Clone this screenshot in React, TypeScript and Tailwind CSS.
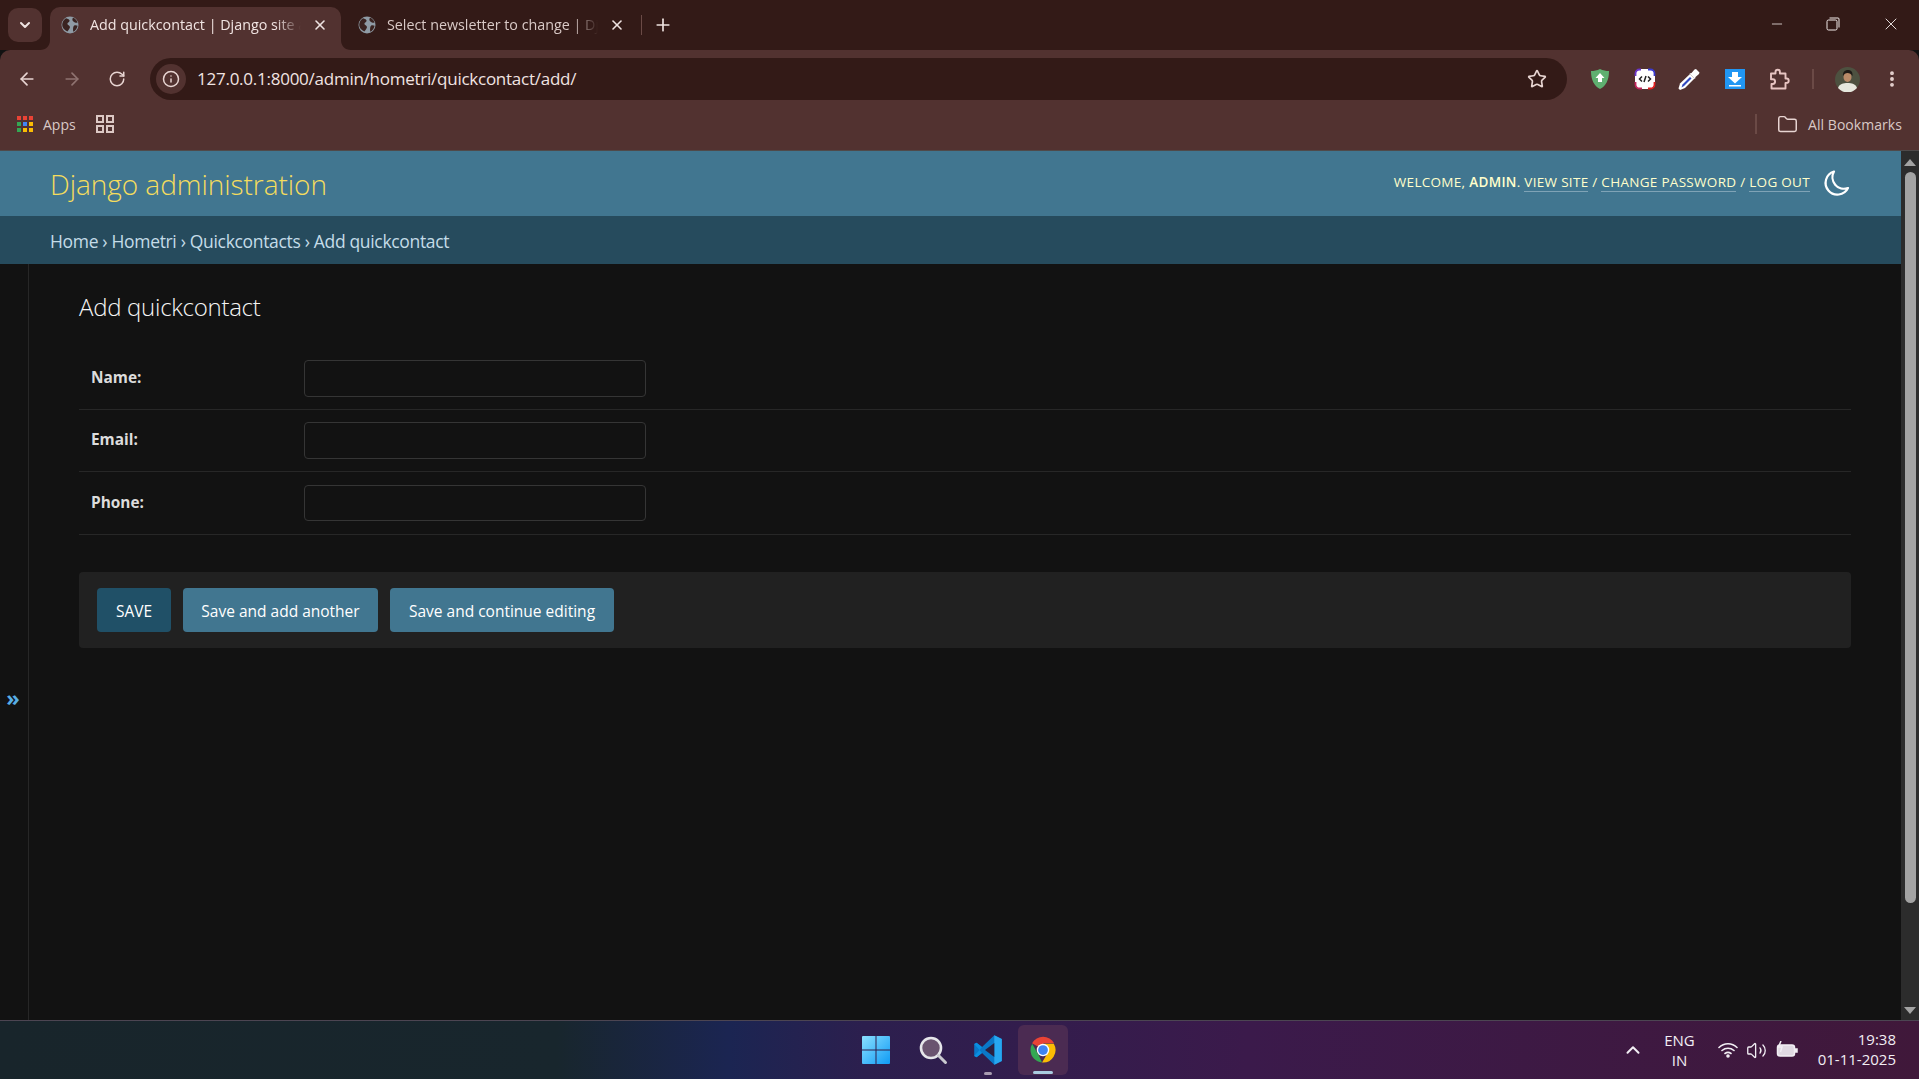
import React from "react";
import { ArrowLeft, ArrowRight, RotateCw, Info, Star, Folder, X, Plus, ChevronDown, ChevronUp, Minus, Volume2, EllipsisVertical } from "lucide-react";

function Globe() {
  return (
    <svg width="18" height="18" viewBox="0 0 18 18" className="shrink-0">
      <circle cx="9" cy="9" r="8.5" fill="#8f9ba5" />
      <path d="M5 2.2c2 .4 3.6 1.4 3.6 2.6S6.8 6.4 6.4 7.6 8 9.4 8.8 10.4 8 13 6.4 15.6C3.4 14 1.2 11.6 1.2 9c0-3 1.6-5.4 3.8-6.8zM12 1.4c2.4 1 4 3 4.6 5.2-1.4.6-3-.2-4.2-1.2S11 3 12 1.4zM13.2 9.4c1.2-.4 2.6-.2 3.4.4-.4 2.6-2 4.8-4.2 6-.6-1.6-.4-5.8.8-6.4z" fill="#3a2320" />
    </svg>
  );
}

function Tab({ active, title }: { active?: boolean; title: string }) {
  return (
    <div className={active ? "relative flex h-[43px] w-[291px] items-center rounded-t-[10px] bg-[#523230] pb-[7px] pl-[11px] text-[#f1e4e2]" : "relative flex h-[43px] w-[300px] items-center pb-[7px] pl-[17px] text-[#d9c9c6]"}>
      {active && (
        <>
          <svg width="10" height="10" viewBox="0 0 10 10" className="absolute bottom-0 left-[-10px]"><path d="M10 0v10H0c6 0 10-4 10-10z" fill="#523230" /></svg>
          <svg width="10" height="10" viewBox="0 0 10 10" className="absolute bottom-0 right-[-10px]"><path d="M0 0v10h10C4 10 0 6 0 0z" fill="#523230" /></svg>
        </>
      )}
      <Globe />
      <span className="ml-[11px] w-[211px] overflow-hidden whitespace-nowrap text-[14.300px] [mask-image:linear-gradient(to_right,black_88%,transparent_100%)]">{title}</span>
      <X size={16} strokeWidth={2.4} className="ml-[11px] text-[#efe3e1]" />
    </div>
  );
}

function CodeExt() {
  return (
    <svg width="22" height="22" viewBox="0 0 22 22">
      <rect x="1" y="1" width="20" height="20" rx="5" fill="#fff" />
      <path d="M7 1.500H5.500a4 4 0 0 0-4 4V8" stroke="#6a35c9" strokeWidth="1.800" fill="none" />
      <path d="M1.500 14v2.500a4 4 0 0 0 4 4H8" stroke="#c4265e" strokeWidth="1.800" fill="none" />
      <path d="M14 20.500h2.500a4 4 0 0 0 4-4V14" stroke="#e02020" strokeWidth="1.800" fill="none" />
      <path d="M14 1.500h2.500a4 4 0 0 1 4 4V8" stroke="#3b3bd0" strokeWidth="1.800" fill="none" />
      <path d="M8 8.500L5.500 11 8 13.500M14 8.500l2.500 2.500-2.500 2.500M12 8l-2 6" stroke="#222" strokeWidth="1.500" fill="none" />
    </svg>
  );
}

function Avatar() {
  return (
    <svg width="25" height="25" viewBox="0 0 25 25">
      <circle cx="12.500" cy="12.500" r="12.500" fill="#4d5140" />
      <path d="M3 21c1-4 5.500-5 9.500-5s8.500 1 9.500 5a12.500 12.500 0 0 1-19 0z" fill="#e6e8de" />
      <ellipse cx="12.500" cy="10" rx="4" ry="5" fill="#b98a68" />
      <path d="M8 9c-.5-4 2-6 5-6s5 2 4.500 6c-1-2-3-3-5-3S9 7 8 9z" fill="#1e1a16" />
    </svg>
  );
}

function Picker() {
  return (
    <svg width="24" height="24" viewBox="0 0 24 24">
      <path d="M2 23l-1.500-1.500 1.500-5L12 7l4.500 4.500L7 21z" fill="#fff" />
      <path d="M3.500 20.500l1-3L12 10l1.500 1.500L6 19z" fill="#3048c0" />
      <path d="M11.500 6.500l2-.5 3-3.500 1.500-.5 3.500 3.500-.5 1.500-3.500 3-.5 2z" fill="#fff" />
    </svg>
  );
}

function PuzzleOutline() {
  return (
    <svg width="23" height="23" viewBox="0 0 23 23" fill="none" stroke="#e8c5c2" strokeWidth="1.900" strokeLinejoin="round">
      <path d="M3 5.500h4.500V4a2.200 2.200 0 0 1 4.400 0v1.500h5.600v5h1a2.200 2.200 0 0 1 0 4.400h-1v5.600H3.500v-4.500h1.200a2.400 2.400 0 0 0 0-4.800H3z" />
    </svg>
  );
}

function Crescent() {
  return (
    <svg width="28" height="28" viewBox="0 0 28 28" fill="none" stroke="#fff" strokeWidth="2.200" strokeLinejoin="round">
      <path d="M12 2.500A11.800 11.800 0 1 0 26 19 A11.500 11.500 0 0 1 12 2.500z" />
    </svg>
  );
}

function Windows() {
  return (
    <svg width="30" height="30" viewBox="0 0 30 30">
      <defs>
        <linearGradient id="wg" x1="0" y1="0" x2="1" y2="1"><stop offset="0" stopColor="#8be0ff" /><stop offset="1" stopColor="#0f9bf5" /></linearGradient>
      </defs>
      <path d="M1 2a1 1 0 0 1 1-1h12.500v13.500H1zM15.500 1H28a1 1 0 0 1 1 1v12.500H15.500zM1 15.500h13.500V29H2a1 1 0 0 1-1-1zM15.500 15.500H29V28a1 1 0 0 1-1 1H15.500z" fill="url(#wg)" />
    </svg>
  );
}

function VSCode() {
  return (
    <svg width="30" height="30" viewBox="0 0 100 100">
      <path d="M71 99l25-12V13L71 1 30 40 12 26 4 30v40l8 4 18-14z" fill="#0a78c8" />
      <path d="M71 1l25 12v74L71 99z" fill="#27a7f0" />
      <path d="M71 27L40 50l31 23z" fill="#2b2040" />
      <path d="M4 30l8-4 18 14-8 10zM4 70l8 4 18-14-8-10z" fill="#0a8fe0" />
    </svg>
  );
}

function Chrome() {
  return (
    <svg width="30" height="30" viewBox="0 0 48 48">
      <path d="M24 24 L6.500 14 A20.500 20.500 0 0 1 41.800 14 H24z" fill="#ea4335" transform="translate(0 -1)" />
      <path d="M4 24a20 20 0 0 1 2.700-10L17 32l5.500 11.900A20 20 0 0 1 4 24z" fill="#34a853" />
      <path d="M24 14h17.300A20 20 0 0 1 22.500 44L33 26z" fill="#fbbc04" />
      <circle cx="24" cy="24" r="10" fill="#fff" />
      <circle cx="24" cy="24" r="7.800" fill="#3f83f1" />
    </svg>
  );
}

function TaskSearch() {
  return (
    <svg width="30" height="30" viewBox="0 0 30 30" fill="none">
      <circle cx="13" cy="13" r="10" fill="#6a5470" stroke="#e6e6ea" strokeWidth="2.600" />
      <path d="M20.500 20.500l7 7" stroke="#c9c9cf" strokeWidth="3" strokeLinecap="round" />
    </svg>
  );
}

function Row({ label, last }: { label: string; last?: boolean }) {
  return (
    <div className={last ? "flex h-[63px] items-center border-b border-[#272727] pb-[1px] pl-[12px]" : "flex h-[62px] items-center border-b border-[#272727] pl-[12px]"}>
      <label className={last ? "w-[213px] text-[15.400px] font-bold text-[#dcdcdc]" : "w-[213px] -translate-y-[1px] text-[15.400px] font-bold text-[#dcdcdc]"}>{label}</label>
      <input className={last ? "h-[36px] w-[342px] rounded-[4px] border border-[#353535] bg-[#121212]" : "h-[37px] w-[342px] rounded-[4px] border border-[#353535] bg-[#121212]"} />
    </div>
  );
}

export default function App() {
  return (
    <div className="flex h-[1079px] w-[1919px] flex-col overflow-hidden bg-[#121212] font-['Open_Sans',sans-serif] text-white">
      {/* title bar */}
      <div className="flex h-[50px] shrink-0 items-end bg-[#331a17]">
        <div className="mb-[8px] ml-[8px] flex h-[34px] w-[34px] items-center justify-center rounded-[10px] bg-[#523230]">
          <ChevronDown size={16} strokeWidth={3} className="text-[#efe3e1]" />
        </div>
        <div className="ml-[8px]"><Tab active title="Add quickcontact | Django site admin" /></div>
        <Tab title="Select newsletter to change | Django site admin" />
        <div className="mb-[15px] h-[20px] w-[1px] bg-[#6b4a46]" />
        <Plus size={20} strokeWidth={2} className="mb-[15px] ml-[11px] text-[#efe3e1]" />
        <div className="mb-[16px] ml-auto flex w-[165px] items-center text-[#f3ebea]">
          <Minus size={16} strokeWidth={1.200} className="ml-[15px]" />
          <svg width="14" height="14" viewBox="0 0 14 14" className="ml-[41px]" fill="none" stroke="currentColor" strokeWidth="1"><rect x="1" y="3" width="10" height="10" rx="1.500" /><path d="M3.500 1H12a1 1 0 0 1 1 1v8.500" /></svg>
          <X size={20} strokeWidth={1.100} className="ml-[41px]" />
        </div>
      </div>
      {/* toolbar */}
      <div className="flex h-[50px] shrink-0 items-center rounded-tl-[10px] rounded-tr-[10px] bg-[#523230] pt-[8px] text-[#e8d5d2]">
        <ArrowLeft size={20} strokeWidth={2} className="ml-[17px]" />
        <ArrowRight size={20} strokeWidth={2} className="ml-[25px] text-[#8f7370]" />
        <RotateCw size={18} strokeWidth={2} className="ml-[26px]" />
        <div className="ml-[24px] flex h-[42px] w-[1417px] items-center rounded-full bg-[#331a17] pl-[6px]">
          <div className="flex h-[30px] w-[30px] items-center justify-center rounded-full bg-[#523230]"><Info size={18} strokeWidth={2} /></div>
          <span className="ml-[11px] text-[17px] tracking-[-0.250px] text-[#f1e4e2]">127.0.0.1:8000/admin/hometri/quickcontact/add/</span>
          <Star size={20} strokeWidth={2} className="ml-auto mr-[20px]" />
        </div>
        <div className="ml-[10px] flex w-[45px] justify-center">
          <svg width="20" height="22" viewBox="0 0 20 22"><path d="M10 1c3 1.500 6 2 9 2 0 9-3 15-9 18C4 18 1 12 1 3c3 0 6-.5 9-2z" fill="#5fb070" /><path d="M10 5l4.500 5H12v4H8v-4H5.500z" fill="#fff" /></svg>
        </div>
        <div className="flex w-[45px] justify-center"><CodeExt /></div>
        <div className="flex w-[45px] justify-center"><Picker /></div>
        <div className="flex w-[45px] justify-center">
          <svg width="20" height="20" viewBox="0 0 20 20"><rect width="20" height="20" fill="#2196f3" /><path d="M7 3h6v5h4l-7 6.500L3 8h4z" fill="#fff" /><rect x="4" y="16" width="12" height="1.500" fill="#fff" /></svg>
        </div>
        <div className="flex w-[45px] justify-center"><PuzzleOutline /></div>
        <div className="ml-[10px] h-[20px] w-[2px] bg-[#6b4a46]" />
        <div className="ml-[21px]"><Avatar /></div>
        <EllipsisVertical size={20} strokeWidth={2.600} className="ml-[22px]" />
      </div>
      {/* bookmarks */}
      <div className="flex h-[51px] shrink-0 items-center border-b border-[#4f4a4a] bg-[#523230] pb-[2px] text-[#e8d5d2]">
        <div className="ml-[17px] grid grid-cols-3 gap-[2px]">
          {["bg-[#ea4335]","bg-[#ea4335]","bg-[#ea4335]","bg-[#34a853]","bg-[#4285f4]","bg-[#fbbc04]","bg-[#34a853]","bg-[#fbbc04]","bg-[#fbbc04]"].map((c, i) => (
            <div key={i} className={"h-[4px] w-[4px] " + c} />
          ))}
        </div>
        <span className="ml-[10px] text-[14px] text-[#d9c9c6]">Apps</span>
        <div className="ml-[20px] grid grid-cols-2 gap-[2px]">
          {[0, 1, 2, 3].map((i) => (
            <div key={i} className="h-[8px] w-[8px] border-2 border-[#dcc8c4]" />
          ))}
        </div>
        <div className="ml-auto h-[20px] w-[2px] bg-[#6b4a46]" />
        <Folder size={21} strokeWidth={1.700} className="ml-[20px] text-[#e8d5d2]" />
        <span className="ml-[10px] mr-[17px] text-[14px] tracking-[0.050px] text-[#d9c9c6]">All Bookmarks</span>
      </div>
      {/* page */}
      <div className="flex min-h-0 flex-1">
        <div className="flex min-w-0 flex-1 flex-col">
          <div className="flex h-[65px] shrink-0 items-center justify-between bg-[#417690] pl-[50px] pr-[52px]">
            <span className="text-[28px] font-light tracking-[-0.050px] text-[#f5dd5d]">Django administration</span>
            <div className="flex items-center">
              <span className="-translate-y-[1px] text-[13.500px] tracking-[0.300px] text-[#ffffcc]">
                WELCOME, <b className="font-semibold">ADMIN</b>.{" "}
                <span className="border-b border-[#7fa3b6]">VIEW SITE</span> /{" "}
                <span className="border-b border-[#7fa3b6]">CHANGE PASSWORD</span> /{" "}
                <span className="border-b border-[#7fa3b6]">LOG OUT</span>
              </span>
              <div className="ml-[12px] mr-[-1px] -translate-y-[1px]"><Crescent /></div>
            </div>
          </div>
          <div className="flex h-[48px] shrink-0 items-center bg-[#264b5d] pl-[50px] pt-[2px] text-[17.500px] tracking-[-0.330px] text-[#c4dce8]">
            Home › Hometri › Quickcontacts › Add quickcontact
          </div>
          <div className="flex min-h-0 flex-1">
            <div className="flex w-[29px] shrink-0 justify-center border-r border-[#272727] pt-[418px]">
              <span className="-translate-x-[1px] text-[22px] font-bold leading-[30px] text-[#58aee6]">»</span>
            </div>
            <div className="flex-1 px-[50px] pt-[24px]">
              <h1 className="text-[24px] font-light leading-[38px] tracking-[-0.280px] text-[#f5f5f5]">Add quickcontact</h1>
              <div className="mt-[22px]">
                <Row label="Name:" />
                <Row label="Email:" />
                <Row label="Phone:" last />
              </div>
              <div className="mt-[37px] flex h-[76px] items-center gap-[12px] rounded-[4px] bg-[#212121] pl-[18px]">
                <button className="h-[44px] w-[74px] rounded-[4px] bg-[#205067] pt-[3px] text-[15.500px] text-white">SAVE</button>
                <button className="h-[44px] w-[195px] rounded-[4px] bg-[#417690] pt-[3px] text-[15.500px] text-white">Save and add another</button>
                <button className="h-[44px] w-[224px] rounded-[4px] bg-[#417690] pt-[3px] text-[15.500px] text-white">Save and continue editing</button>
              </div>
            </div>
          </div>
        </div>
        {/* scrollbar */}
        <div className="flex w-[18px] shrink-0 flex-col items-center bg-[#2c2c2c]">
          <div className="mt-[8px] h-0 w-0 border-x-[6px] border-b-[7px] border-x-transparent border-b-[#a3a3a3]" />
          <div className="mt-[6px] h-[731px] w-[11px] rounded-full bg-[#a3a3a3]" />
          <div className="mb-[6px] mt-auto h-0 w-0 border-x-[6px] border-t-[7px] border-x-transparent border-t-[#a3a3a3]" />
        </div>
      </div>
      {/* taskbar */}
      <div className="relative flex h-[59px] shrink-0 items-center border-t border-[#4c4552] bg-[linear-gradient(90deg,#18252b_0%,#18262d_29%,#1b2552_38%,#2c1f4e_45%,#3b1a4b_65%,#40183a_100%)]">
        <div className="ml-[861px]"><Windows /></div>
        <div className="ml-[27px]"><TaskSearch /></div>
        <div className="relative ml-[25px]"><VSCode /><div className="absolute bottom-[-10px] left-[11px] h-[3px] w-[8px] rounded-full bg-[#a89bb0]" /></div>
        <div className="relative ml-[15px] flex h-[50px] w-[50px] items-center justify-center rounded-[6px] bg-[#4b2b52]"><Chrome /><div className="absolute bottom-[1px] left-[15px] h-[3px] w-[20px] rounded-full bg-[#a9cbe0]" /></div>
        <div className="ml-auto flex items-center text-[#f2eef4]">
          <ChevronUp size={22} strokeWidth={2.200} className="mr-[20px]" />
          <div className="mr-[23px] text-center text-[15px] leading-[20px]"><div>ENG</div><div>IN</div></div>
          <svg width="20" height="16" viewBox="0 0 20 16" fill="none" stroke="currentColor" strokeWidth="1.600" strokeLinecap="round"><path d="M1 5.500c5-5 13-5 18 0M4 8.500c3.500-3 8.500-3 12 0M7 11.500c2-1.500 4-1.500 6 0" /><circle cx="10" cy="14" r="1" fill="currentColor" /></svg>
          <Volume2 size={21} strokeWidth={1.500} className="ml-[8px]" />
          <svg width="22" height="18" viewBox="0 0 22 18" className="ml-[9px]" fill="none" stroke="currentColor" strokeWidth="1.500"><rect x="1.500" y="4" width="17" height="11" rx="2.500" fill="currentColor" fillOpacity="0.900" /><path d="M19 8v3h2V8z" fill="currentColor" /><path d="M5 0L2.500 6H6l-1.500 5" /></svg>
          <div className="ml-[20px] mr-[23px] -translate-y-[1px] text-right text-[15px] leading-[20px]"><div>19:38</div><div>01-11-2025</div></div>
        </div>
      </div>
    </div>
  );
}
